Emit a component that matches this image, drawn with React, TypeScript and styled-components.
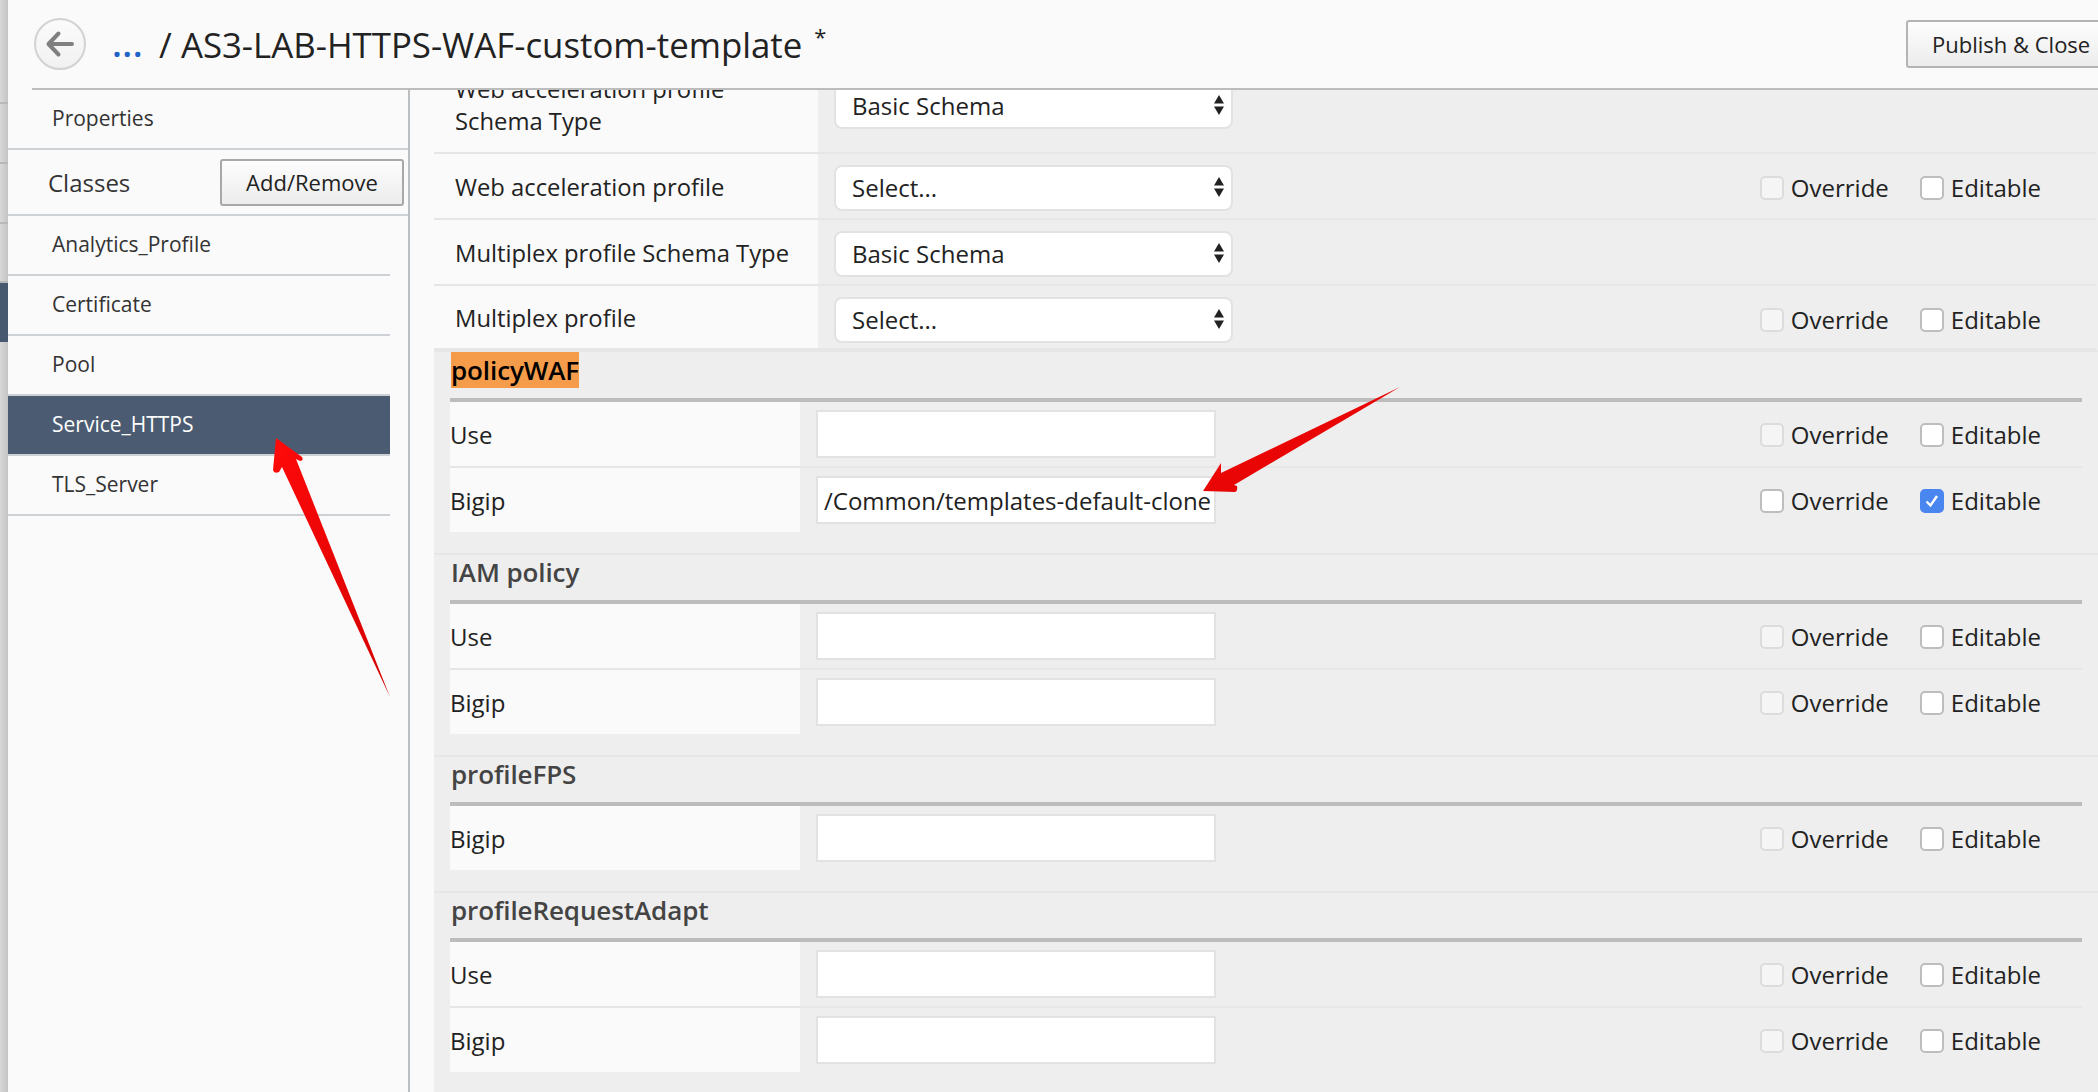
import { createGlobalStyle } from "styled-components";
import styled from "styled-components";

const GlobalStyle = createGlobalStyle`
  html, body {
    margin: 0;
    padding: 0;
    background: #fafafa;
  }
  * {
    box-sizing: border-box;
  }
`;

const Page = styled.div`
  position: relative;
  display: flex;
  width: 2098px;
  height: 1092px;
  overflow: hidden;
  font-family: "Open Sans", "Noto Sans", sans-serif;
  color: #222;
  background: #fafafa;
`;

const BackStrip = styled.div`
  flex: 0 0 8px;
  display: flex;
  flex-direction: column;
  background: linear-gradient(to right, #d8d8d8, #c4c4c4);
`;

const StripGap = styled.div<{ $h: number }>`
  height: ${(p) => p.$h}px;
  border-bottom: 2px solid #b8b8b8;
`;

const StripActive = styled.div`
  height: 59px;
  background: #47596f;
`;

const Shell = styled.div`
  flex: 1;
  display: flex;
  flex-direction: column;
  min-width: 0;
`;

const Header = styled.header`
  flex: 0 0 88px;
  display: flex;
  align-items: center;
  padding-left: 26px;
  background: #fafafa;
`;

const BackButton = styled.div`
  display: flex;
  align-items: center;
  justify-content: center;
  width: 52px;
  height: 52px;
  border: 2px solid #d2d2d2;
  border-radius: 50%;
  background: linear-gradient(#fbfbfb, #f1f1f1);
`;

const Dots = styled.span`
  margin-left: 26px;
  font-size: 36px;
  font-weight: 600;
  line-height: 1;
  letter-spacing: 0.5px;
  color: #1f62c8;
`;

const Title = styled.h1`
  margin: 0 0 0 16px;
  font-size: 34.8px;
  font-weight: 400;
  color: #222;
  white-space: nowrap;
`;

const Star = styled.sup`
  margin-left: 12px;
  font-size: 22px;
  line-height: 0;
`;

const PublishButton = styled.button`
  margin-left: auto;
  margin-right: -30px;
  width: 222px;
  height: 48px;
  padding: 0 0 0 24px;
  text-align: left;
  font-family: inherit;
  font-size: 22px;
  color: #222;
  border: 2px solid #b4b4b4;
  border-radius: 3px;
  background: linear-gradient(#fdfdfd, #ececec);
`;

const HeaderRule = styled.div`
  flex: 0 0 2px;
  margin-left: 24px;
  background: #bcbcbc;
`;

const Body = styled.div`
  flex: 1;
  display: flex;
  min-height: 0;
`;

const Sidebar = styled.aside`
  flex: 0 0 402px;
  display: flex;
  flex-direction: column;
  border-right: 2px solid #bcbfc2;
`;

const SidebarRow = styled.div`
  height: 60px;
  display: flex;
  align-items: center;
  padding: 0 0 2px 44px;
  font-size: 21px;
  color: #333;
  border-bottom: 2px solid #cdd1d5;
`;

const ClassesRow = styled.div`
  height: 66px;
  display: flex;
  align-items: center;
  justify-content: space-between;
  padding: 0 4px 0 40px;
  font-size: 24px;
  color: #333;
  border-bottom: 2px solid #cdd1d5;
`;

const AddButton = styled.button`
  width: 184px;
  height: 47px;
  padding: 0;
  font-family: inherit;
  font-size: 22px;
  color: #222;
  border: 2px solid #a8a8a8;
  border-radius: 3px;
  background: linear-gradient(#fdfdfd, #ececec);
`;

const ClassItem = styled.div<{ $active?: boolean }>`
  height: 60px;
  width: 382px;
  display: flex;
  align-items: center;
  padding: 0 0 2px 44px;
  font-size: 21px;
  color: ${(p) => (p.$active ? "#fff" : "#333")};
  background: ${(p) => (p.$active ? "#4b5c72" : "transparent")};
  border-bottom: 2px solid #cdd1d5;
`;

const Main = styled.main`
  flex: 1;
  min-width: 0;
  padding-left: 24px;
  overflow: hidden;
`;

const Panel = styled.div`
  display: flex;
  flex-direction: column;
  background: #eeeeee;
`;

const TopRow = styled.div<{ $h: number }>`
  height: ${(p) => p.$h}px;
  display: flex;
  align-items: flex-end;
  overflow: hidden;
  margin-right: 2px;
  border-bottom: 2px solid #e6e6e6;
`;

const TopLabelCell = styled.div<{ $bottom?: number }>`
  flex: 0 0 384px;
  align-self: stretch;
  display: flex;
  align-items: flex-end;
  padding: 0 0 ${(p) => p.$bottom ?? 15}px 21px;
  font-size: 23.8px;
  line-height: 32px;
  background: #fafafa;
`;

const TopControlCell = styled.div<{ $bottom?: number }>`
  flex: 1;
  display: flex;
  align-items: flex-end;
  padding: 0 0 ${(p) => p.$bottom ?? 7}px 16px;
`;

const SelectBox = styled.div`
  width: 399px;
  height: 46px;
  flex: none;
  display: flex;
  align-items: center;
  justify-content: space-between;
  padding: 0 6px 2px 16px;
  font-size: 24px;
  background: #fff;
  border: 2px solid #e2e2e2;
  border-radius: 8px;
`;

const Flags = styled.div`
  margin: 0 55px 2px auto;
  display: flex;
  align-items: center;
  align-self: center;
  gap: 31px;
`;

const Flag = styled.label`
  display: flex;
  align-items: center;
  gap: 7px;
  font-size: 24px;
  color: #222;
`;

const Box = styled.span<{ $checked?: boolean; $dim?: boolean }>`
  width: 24px;
  height: 24px;
  margin-top: 2px;
  display: flex;
  align-items: center;
  justify-content: center;
  border-radius: 5px;
  border: 2px solid
    ${(p) => (p.$checked ? "#4a86f0" : p.$dim ? "#dcdcdc" : "#bdbdbd")};
  background: ${(p) =>
    p.$checked ? "#4a86f0" : p.$dim ? "#f5f5f5" : "#ffffff"};
`;

const Section = styled.section`
  border-top: 2px solid #e6e6e6;
  padding: 0 16px 21px 16px;
`;

const SectionHead = styled.div<{ $h?: number }>`
  height: ${(p) => p.$h ?? 45}px;
  display: flex;
  align-items: flex-start;
`;

const SectionName = styled.span<{ $mark?: boolean }>`
  font-size: 26px;
  font-weight: 600;
  line-height: 36px;
  letter-spacing: -0.1px;
  margin: ${(p) => (p.$mark ? "0" : "-1px")} 0 0 1px;
  color: ${(p) => (p.$mark ? "#000" : "#444")};
  background: ${(p) => (p.$mark ? "#f59c4a" : "transparent")};
`;

const SectionBar = styled.div`
  height: 4px;
  background: #bcbcbc;
`;

const FieldRow = styled.div`
  height: 66px;
  display: flex;
  border-bottom: 2px solid #e6e6e6;
  &:last-child {
    height: 64px;
    border-bottom: 0;
  }
`;

const FieldLabel = styled.div`
  flex: 0 0 350px;
  display: flex;
  align-items: center;
  font-size: 24px;
  background: #fafafa;
`;

const FieldControl = styled.div`
  flex: 1;
  display: flex;
  padding-left: 16px;
`;

const TextInput = styled.div`
  width: 400px;
  height: 48px;
  margin-top: 8px;
  flex: none;
  display: flex;
  align-items: center;
  padding-left: 6px;
  font-size: 24px;
  white-space: nowrap;
  overflow: hidden;
  background: #fff;
  border: 2px solid #e2e2e2;
`;

const FieldFlags = styled(Flags)`
  margin: 0 41px 0 auto;
`;

const ArrowOverlay = styled.svg`
  position: absolute;
  left: 0;
  top: 0;
  pointer-events: none;
`;

const SelectArrows = () => (
  <svg width="12" height="24" viewBox="0 0 12 24">
    <path d="M6 2 L11 10.5 H1 Z M1 13.5 H11 L6 22 Z" fill="#222" />
  </svg>
);

const Check = () => (
  <svg width="16" height="16" viewBox="0 0 16 16">
    <path
      d="M2.5 8.5 L6.5 12.5 L13 3"
      fill="none"
      stroke="#fff"
      strokeWidth="2.4"
    />
  </svg>
);

type FlagSpec = { overrideOn?: boolean; editableOn?: boolean };

const FlagPair = ({ overrideOn, editableOn }: FlagSpec) => (
  <>
    <Flag>
      <Box $dim={!overrideOn} />
      Override
    </Flag>
    <Flag>
      <Box $checked={editableOn}>{editableOn && <Check />}</Box>
      Editable
    </Flag>
  </>
);

type Field = {
  label: string;
  value?: string;
  overrideOn?: boolean;
  editableOn?: boolean;
};

const sections: { name: string; mark?: boolean; fields: Field[] }[] = [
  {
    name: "policyWAF",
    mark: true,
    fields: [
      { label: "Use" },
      {
        label: "Bigip",
        value: "/Common/templates-default-clone",
        overrideOn: true,
        editableOn: true,
      },
    ],
  },
  { name: "IAM policy", fields: [{ label: "Use" }, { label: "Bigip" }] },
  { name: "profileFPS", fields: [{ label: "Bigip" }] },
  {
    name: "profileRequestAdapt",
    fields: [{ label: "Use" }, { label: "Bigip" }],
  },
];

const classes = [
  "Analytics_Profile",
  "Certificate",
  "Pool",
  "Service_HTTPS",
  "TLS_Server",
];

export default function App() {
  return (
    <Page>
      <GlobalStyle />
      <BackStrip>
        <StripGap $h={104} />
        <StripGap $h={60} />
        <StripGap $h={60} />
        <StripGap $h={59} />
        <StripActive />
      </BackStrip>
      <Shell>
        <Header>
          <BackButton>
            <svg width="30" height="28" viewBox="0 0 30 28">
              <path
                d="M27 14 H4 M13.5 3.5 L3.5 14 L13.5 24.5"
                fill="none"
                stroke="#808080"
                strokeWidth="4"
                strokeLinecap="round"
                strokeLinejoin="round"
              />
            </svg>
          </BackButton>
          <Dots>...</Dots>
          <Title>
            / AS3-LAB-HTTPS-WAF-custom-template
            <Star>*</Star>
          </Title>
          <PublishButton>Publish &amp; Close</PublishButton>
        </Header>
        <HeaderRule />
        <Body>
          <Sidebar>
            <SidebarRow>Properties</SidebarRow>
            <ClassesRow>
              Classes
              <AddButton>Add/Remove</AddButton>
            </ClassesRow>
            {classes.map((c) => (
              <ClassItem key={c} $active={c === "Service_HTTPS"}>
                {c}
              </ClassItem>
            ))}
          </Sidebar>
          <Main>
            <Panel>
              <TopRow $h={64}>
                <TopLabelCell>
                  Web acceleration profile
                  <br />
                  Schema Type
                </TopLabelCell>
                <TopControlCell $bottom={23}>
                  <SelectBox>
                    Basic Schema
                    <SelectArrows />
                  </SelectBox>
                </TopControlCell>
              </TopRow>
              <TopRow $h={66}>
                <TopLabelCell>Web acceleration profile</TopLabelCell>
                <TopControlCell>
                  <SelectBox>
                    Select...
                    <SelectArrows />
                  </SelectBox>
                  <Flags>
                    <FlagPair />
                  </Flags>
                </TopControlCell>
              </TopRow>
              <TopRow $h={66}>
                <TopLabelCell>Multiplex profile Schema Type</TopLabelCell>
                <TopControlCell>
                  <SelectBox>
                    Basic Schema
                    <SelectArrows />
                  </SelectBox>
                </TopControlCell>
              </TopRow>
              <TopRow $h={64}>
                <TopLabelCell $bottom={14}>Multiplex profile</TopLabelCell>
                <TopControlCell $bottom={5}>
                  <SelectBox>
                    Select...
                    <SelectArrows />
                  </SelectBox>
                  <Flags>
                    <FlagPair />
                  </Flags>
                </TopControlCell>
              </TopRow>
              {sections.map((s) => (
                <Section key={s.name}>
                  <SectionHead $h={s.mark ? 46 : 45}>
                    <SectionName $mark={s.mark}>{s.name}</SectionName>
                  </SectionHead>
                  <SectionBar />
                  {s.fields.map((f) => (
                    <FieldRow key={f.label}>
                      <FieldLabel>{f.label}</FieldLabel>
                      <FieldControl>
                        <TextInput>{f.value}</TextInput>
                        <FieldFlags>
                          <FlagPair
                            overrideOn={f.overrideOn}
                            editableOn={f.editableOn}
                          />
                        </FieldFlags>
                      </FieldControl>
                    </FieldRow>
                  ))}
                </Section>
              ))}
            </Panel>
          </Main>
        </Body>
      </Shell>
      <ArrowOverlay width="2098" height="1092" viewBox="0 0 2098 1092">
        <defs>
          <linearGradient id="arrowRed" x1="0" y1="0" x2="1" y2="1">
            <stop offset="0" stopColor="#ff0a0a" />
            <stop offset="1" stopColor="#d40000" />
          </linearGradient>
        </defs>
        <path
          d="M276 438 L302 457 Q304 461 300 461 L296 459 L390 697 L282 467 L279 472 Q274 474 273 470 Z"
          fill="url(#arrowRed)"
        />
        <path
          d="M1203 491 L1221 463 L1221 473 L1400 387 L1234 485 L1237 486 Q1238 491 1235 492 Z"
          fill="url(#arrowRed)"
        />
      </ArrowOverlay>
    </Page>
  );
}
